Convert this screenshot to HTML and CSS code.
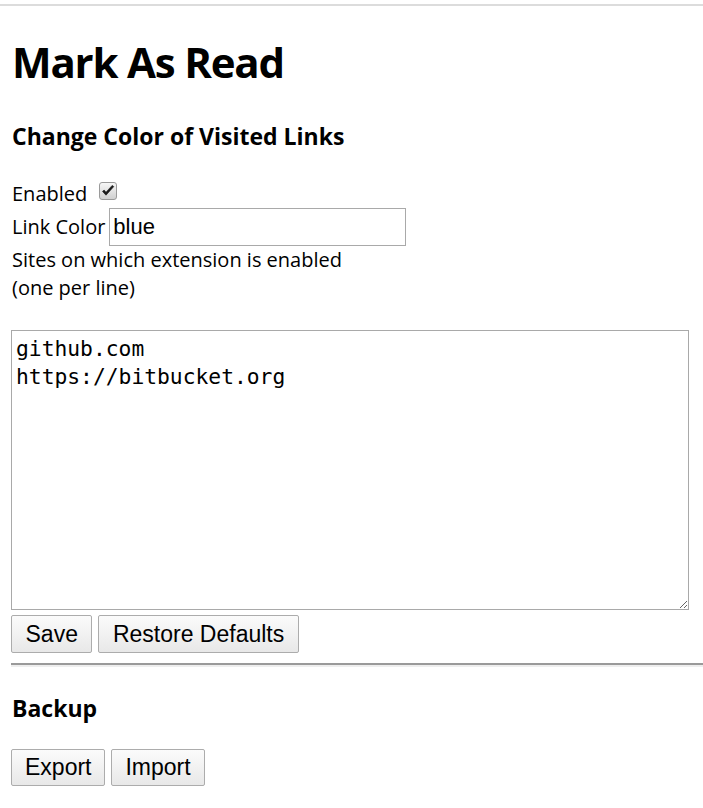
FILE: index.html
```html
<!DOCTYPE html>
<html>
<head>
<meta charset="utf-8">
<title>Mark As Read</title>
<link rel="stylesheet" href="styles.css">
</head>
<body>
<div class="topline"></div>
<main class="page">
  <h1 class="title">Mark As Read</h1>
  <h2 class="heading">Change Color of Visited Links</h2>
  <div class="row row-enabled">
    <label class="label" for="enabled">Enabled</label>
    <input class="check" type="checkbox" id="enabled" checked>
  </div>
  <div class="row row-color">
    <label class="label" for="color">Link Color</label>
    <input class="text-input" type="text" id="color" value="blue">
  </div>
  <div class="row row-sites">
    <label class="label" for="sites">Sites on which extension is enabled<br>(one per line)</label>
  </div>
  <textarea class="sites" id="sites" spellcheck="false">github.com
https://bitbucket.org</textarea>
  <div class="buttons buttons-save">
    <button class="btn">Save</button>
    <button class="btn">Restore Defaults</button>
  </div>
  <hr class="divider">
  <h2 class="heading heading-backup">Backup</h2>
  <div class="buttons buttons-backup">
    <button class="btn">Export</button>
    <button class="btn">Import</button>
  </div>
</main>
</body>
</html>
```
FILE: styles.css
```css
html, body {
  margin: 0;
  padding: 0;
  background: #fff;
}
body {
  font-family: "Open Sans", "Noto Sans", sans-serif;
  color: #000;
}
.topline {
  margin-top: 4px;
  border-top: 2px solid #dcdcdc;
}
.page {
  padding-left: 11px;
  display: flex;
  flex-direction: column;
  align-items: flex-start;
}
.title {
  margin: 28px 0 0 1px;
  font-size: 42px;
  line-height: 56px;
  font-weight: 700;
  letter-spacing: -1.2px;
}
.heading {
  margin: 31px 0 0 1px;
  font-size: 23px;
  line-height: 30px;
  font-weight: 700;
}
.heading-backup {
  margin-top: 26px;
}
.row {
  display: flex;
  align-items: baseline;
  margin-left: 1px;
}
.label {
  font-size: 20px;
  line-height: 28px;
}
.row-enabled {
  margin-top: 29px;
  height: 28px;
  align-items: flex-start;
}
.check {
  appearance: none;
  -webkit-appearance: none;
  margin: 2px 0 0 12px;
  width: 18px;
  height: 18px;
  border: 1px solid #9a9a9a;
  border-radius: 3px;
  background: linear-gradient(#f6f6f6, #d0d0d0);
  box-sizing: border-box;
  position: relative;
}
.check:checked::after {
  content: "";
  position: absolute;
  left: 1px;
  top: 1px;
  width: 14px;
  height: 14px;
  background: no-repeat center / 14px 14px url("data:image/svg+xml,%3Csvg xmlns='http://www.w3.org/2000/svg' viewBox='0 0 14 14'%3E%3Cpath d='M1.5 7.4 L5 11.2 L12.8 2.6 L11.2 1.4 L5 8.2 L3.1 6 Z' fill='%231a1a1a' stroke='%231a1a1a' stroke-width='0.6' stroke-linejoin='round'/%3E%3C/svg%3E");
}
.row-color {
  height: 38px;
}
.text-input {
  margin-left: 4px;
  width: 297px;
  height: 38px;
  box-sizing: border-box;
  border: 1px solid #a9a9a9;
  padding: 0 3px;
  font-family: "Liberation Sans", Arial, sans-serif;
  font-size: 22px;
  color: #000;
  outline: none;
}
.sites {
  margin-top: 28px;
  width: 678px;
  height: 280px;
  box-sizing: border-box;
  border: 1px solid #a9a9a9;
  padding: 4px 4px;
  font-family: "DejaVu Sans Mono", monospace;
  font-size: 21.3px;
  line-height: 27.5px;
  color: #000;
  outline: none;
}
.buttons {
  display: flex;
  gap: 6px;
}
.buttons-save {
  margin-top: 5px;
}
.buttons-backup {
  margin-top: 26px;
}
.btn {
  height: 38px;
  padding: 0 13.5px;
  border: 1px solid #acacac;
  border-radius: 2px;
  background: linear-gradient(#fbfbfb, #e8e8e8);
  font-family: "Liberation Sans", Arial, sans-serif;
  font-size: 23px;
  color: #000;
}
.buttons-backup .btn {
  height: 37px;
  padding: 0 13px;
}
.divider {
  align-self: stretch;
  margin: 10px 0 0 0;
  height: 0;
  border: 0;
  border-top: 2px solid #9a9a9a;
  border-bottom: 2px solid #eeeeee;
}
```
